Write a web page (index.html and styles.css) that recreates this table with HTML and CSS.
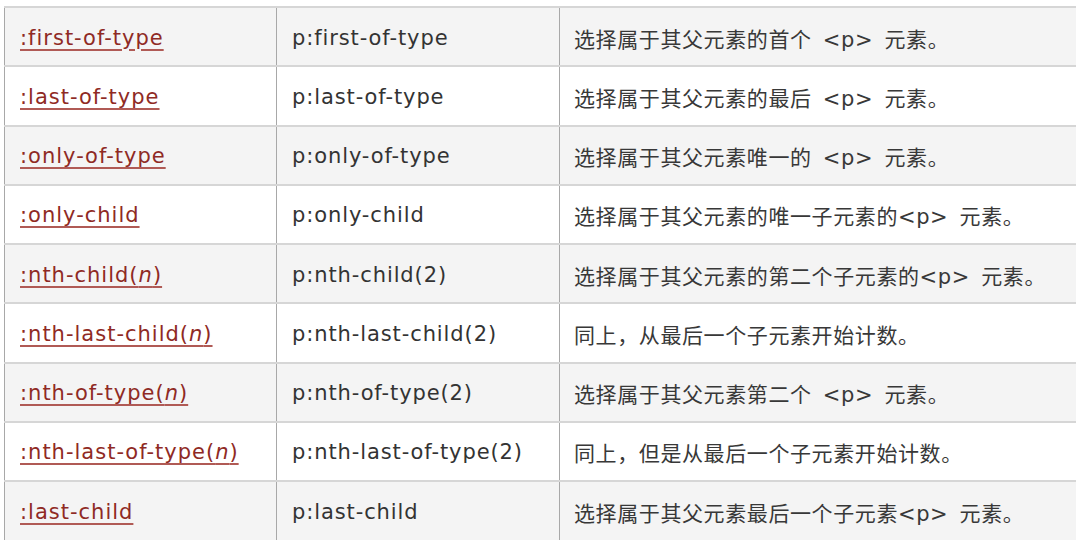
FILE: index.html
```html
<!DOCTYPE html>
<html lang="zh">
<head>
<meta charset="utf-8">
<link rel="stylesheet" href="styles.css">
</head>
<body>
<div class="wrap">
<table class="ref">
<tbody>
<tr class="alt"><td class="sel"><a href="#">:first-of-type</a></td><td class="ex">p:first-of-type</td><td class="desc">选择属于其父元素的首个 &lt;p&gt; 元素。</td></tr>
<tr><td class="sel"><a href="#">:last-of-type</a></td><td class="ex">p:last-of-type</td><td class="desc">选择属于其父元素的最后 &lt;p&gt; 元素。</td></tr>
<tr class="alt"><td class="sel"><a href="#">:only-of-type</a></td><td class="ex">p:only-of-type</td><td class="desc">选择属于其父元素唯一的 &lt;p&gt; 元素。</td></tr>
<tr><td class="sel"><a href="#">:only-child</a></td><td class="ex">p:only-child</td><td class="desc">选择属于其父元素的唯一子元素的&lt;p&gt; 元素。</td></tr>
<tr class="alt"><td class="sel"><a href="#">:nth-child(<i>n</i>)</a></td><td class="ex">p:nth-child(2)</td><td class="desc">选择属于其父元素的第二个子元素的&lt;p&gt; 元素。</td></tr>
<tr><td class="sel"><a href="#">:nth-last-child(<i>n</i>)</a></td><td class="ex">p:nth-last-child(2)</td><td class="desc">同上，从最后一个子元素开始计数。</td></tr>
<tr class="alt"><td class="sel"><a href="#">:nth-of-type(<i>n</i>)</a></td><td class="ex">p:nth-of-type(2)</td><td class="desc">选择属于其父元素第二个 &lt;p&gt; 元素。</td></tr>
<tr><td class="sel"><a href="#">:nth-last-of-type(<i>n</i>)</a></td><td class="ex">p:nth-last-of-type(2)</td><td class="desc">同上，但是从最后一个子元素开始计数。</td></tr>
<tr class="alt last"><td class="sel"><a href="#">:last-child</a></td><td class="ex">p:last-child</td><td class="desc">选择属于其父元素最后一个子元素&lt;p&gt; 元素。</td></tr>
</tbody>
</table>
</div>
</body>
</html>
```

FILE: styles.css
```css
html, body {
  margin: 0;
  padding: 0;
  background: #ffffff;
}

.wrap {
  padding: 6px 4px 0 4px;
}

.ref {
  border-collapse: collapse;
  table-layout: fixed;
  width: 1072px;
  font-family: "DejaVu Sans", Verdana, "Noto Sans CJK SC", sans-serif;
  font-size: 21px;
  letter-spacing: 0.9px;
  color: #333333;
}

.ref td {
  height: 59.25px;
  box-sizing: border-box;
  padding: 2px 0 0 15px;
  border-top: 2px solid #d6d6d6;
  border-left: 1px solid #a8a8a8;
  vertical-align: middle;
  white-space: nowrap;
}

.ref tr.alt td {
  background: #f4f4f4;
}

.ref td.sel {
  width: 272px;
}

.ref td.ex {
  width: 283px;
}

.ref td.desc {
  font-family: "DejaVu Sans", Verdana, "Noto Sans CJK SC", sans-serif;
  font-size: 21px;
  letter-spacing: 0.6px;
  word-spacing: 4px;
  padding-left: 14px;
  color: #383838;
}

.ref td.sel a {
  color: #8f2a24;
  letter-spacing: 1px;
  text-decoration: underline;
  text-decoration-color: #b05a55;
  text-underline-offset: 4px;
  text-decoration-thickness: 2px;
}

.ref td.sel i {
  font-style: italic;
}
```
